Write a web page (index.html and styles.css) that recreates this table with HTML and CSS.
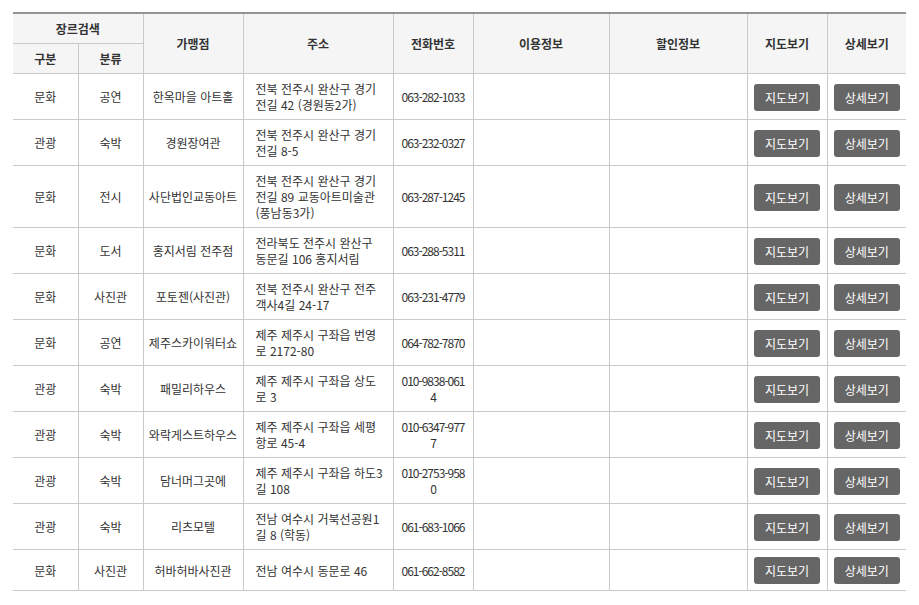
FILE: index.html
```html
<!DOCTYPE html>
<html lang="ko">
<head>
<meta charset="utf-8">
<title>목록</title>
<link rel="stylesheet" href="styles.css">
</head>
<body>
<div class="wrap">
<table class="list">
<colgroup>
<col class="c-a"><col class="c-b"><col class="c-name"><col class="c-addr"><col class="c-tel"><col class="c-use"><col class="c-sale"><col class="c-map"><col class="c-det">
</colgroup>
<thead>
<tr class="h1">
<th colspan="2">장르검색</th>
<th rowspan="2">가맹점</th>
<th rowspan="2">주소</th>
<th rowspan="2">전화번호</th>
<th rowspan="2">이용정보</th>
<th rowspan="2">할인정보</th>
<th rowspan="2">지도보기</th>
<th rowspan="2">상세보기</th>
</tr>
<tr class="h2">
<th>구분</th>
<th>분류</th>
</tr>
</thead>
<tbody>
<tr><td>문화</td><td>공연</td><td>한옥마을 아트홀</td><td class="addr">전북 전주시 완산구 경기전길 42 (경원동2가)</td><td class="tel">063-282-1033</td><td></td><td></td><td><a class="btn">지도보기</a></td><td><a class="btn">상세보기</a></td></tr>
<tr><td>관광</td><td>숙박</td><td>경원장여관</td><td class="addr">전북 전주시 완산구 경기전길 8-5</td><td class="tel">063-232-0327</td><td></td><td></td><td><a class="btn">지도보기</a></td><td><a class="btn">상세보기</a></td></tr>
<tr><td>문화</td><td>전시</td><td>사단법인교동아트</td><td class="addr">전북 전주시 완산구 경기전길 89 교동아트미술관 (풍남동3가)</td><td class="tel">063-287-1245</td><td></td><td></td><td><a class="btn">지도보기</a></td><td><a class="btn">상세보기</a></td></tr>
<tr><td>문화</td><td>도서</td><td>홍지서림 전주점</td><td class="addr">전라북도 전주시 완산구 동문길 106 홍지서림</td><td class="tel">063-288-5311</td><td></td><td></td><td><a class="btn">지도보기</a></td><td><a class="btn">상세보기</a></td></tr>
<tr><td>문화</td><td>사진관</td><td>포토젠(사진관)</td><td class="addr">전북 전주시 완산구 전주객사4길 24-17</td><td class="tel">063-231-4779</td><td></td><td></td><td><a class="btn">지도보기</a></td><td><a class="btn">상세보기</a></td></tr>
<tr><td>문화</td><td>공연</td><td>제주스카이워터쇼</td><td class="addr">제주 제주시 구좌읍 번영로 2172-80</td><td class="tel">064-782-7870</td><td></td><td></td><td><a class="btn">지도보기</a></td><td><a class="btn">상세보기</a></td></tr>
<tr><td>관광</td><td>숙박</td><td>패밀리하우스</td><td class="addr">제주 제주시 구좌읍 상도로 3</td><td class="tel">010-9838-0614</td><td></td><td></td><td><a class="btn">지도보기</a></td><td><a class="btn">상세보기</a></td></tr>
<tr><td>관광</td><td>숙박</td><td>와락게스트하우스</td><td class="addr">제주 제주시 구좌읍 세평항로 45-4</td><td class="tel">010-6347-9777</td><td></td><td></td><td><a class="btn">지도보기</a></td><td><a class="btn">상세보기</a></td></tr>
<tr><td>관광</td><td>숙박</td><td>담너머그곳에</td><td class="addr">제주 제주시 구좌읍 하도3길 108</td><td class="tel">010-2753-9580</td><td></td><td></td><td><a class="btn">지도보기</a></td><td><a class="btn">상세보기</a></td></tr>
<tr><td>관광</td><td>숙박</td><td>리츠모텔</td><td class="addr">전남 여수시 거북선공원1길 8 (학동)</td><td class="tel">061-683-1066</td><td></td><td></td><td><a class="btn">지도보기</a></td><td><a class="btn">상세보기</a></td></tr>
<tr><td>문화</td><td>사진관</td><td>허바허바사진관</td><td class="addr">전남 여수시 동문로 46</td><td class="tel">061-662-8582</td><td></td><td></td><td><a class="btn">지도보기</a></td><td><a class="btn">상세보기</a></td></tr>
</tbody>
</table>
</div>
</body>
</html>
```
FILE: styles.css
```css
html, body {
  margin: 0;
  padding: 0;
  background: #fff;
}
body {
  font-family: "Noto Sans CJK KR", "Noto Sans", sans-serif;
  font-size: 12px;
  color: #333;
}
.wrap {
  padding: 12px 13px;
}
.list {
  width: 893px;
  border-collapse: collapse;
  table-layout: fixed;
  border-top: 2px solid #949494;
}
.c-a { width: 65px; }
.c-b { width: 65px; }
.c-name { width: 100px; }
.c-addr { width: 150px; }
.c-tel { width: 80px; }
.c-use { width: 136px; }
.c-sale { width: 138px; }
.c-map { width: 80px; }
.c-det { width: 79px; }
.list th, .list td {
  border: 1px solid #cacaca;
  text-align: center;
  vertical-align: middle;
  line-height: 16px;
  word-break: break-all;
}
.list tr > :first-child { border-left: 0; }
.list tr > :last-child { border-right: 0; }
.list thead tr.h2 > :last-child { border-right: 1px solid #cacaca; }
.list th {
  background: #f5f5f5;
  font-weight: 700;
  color: #333;
  padding: 0 4px;
}
.list tr.h1 th { height: 29px; }
.list tr.h2 th { height: 29px; }
.list td {
  padding: 7px 4px 6px;
}
.list td.addr {
  text-align: left;
  padding-left: 12px;
  padding-right: 8px;
}
.list td.tel {
  padding-left: 6px;
  padding-right: 6px;
  letter-spacing: -1px;
}
.btn {
  display: block;
  width: 66px;
  height: 27px;
  line-height: 27px;
  margin: 0 auto;
  background: #666;
  color: #fff;
  border-radius: 3px;
  text-align: center;
}
```
